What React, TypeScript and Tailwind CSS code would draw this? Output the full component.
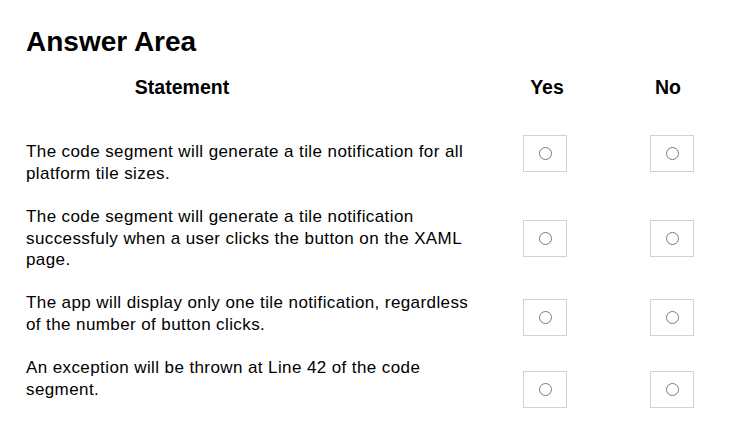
import React from "react";

const rows = [
  {
    text: "The code segment will generate a tile notification for all platform tile sizes.",
    rowMt: "mt-[42px]",
    boxMt: "-mt-[6px]",
  },
  {
    text: "The code segment will generate a tile notification successfuly when a user clicks the button on the XAML page.",
    rowMt: "mt-[22px]",
    boxMt: "mt-[14px]",
  },
  {
    text: "The app will display only one tile notification, regardless of the number of button clicks.",
    rowMt: "mt-[21.5px]",
    boxMt: "mt-[7px]",
  },
  {
    text: "An exception will be thrown at Line 42 of the code segment.",
    rowMt: "mt-[21px]",
    boxMt: "mt-[14px]",
  },
];

function Box() {
  return (
    <div className="w-[44px] h-[37px] border border-[#d2d2d2] bg-white flex items-center justify-center">
      <div className="w-[13px] h-[13px] rounded-full border border-[#7a7a7a]" />
    </div>
  );
}

export default function App() {
  return (
    <div
      className="w-[743px] h-[434px] bg-white text-black overflow-hidden"
      style={{ fontFamily: '"Liberation Sans", Arial, sans-serif' }}
    >
      <div className="pt-[26px] pl-[26px] text-[28px] leading-[32px] font-bold">Answer Area</div>
      <div className="mt-[17px] flex pl-[26px] text-[19.5px] leading-[24px] font-bold">
        <div className="w-[312px] text-center">Statement</div>
        <div className="ml-[179px] w-[60px] text-center">Yes</div>
        <div className="ml-[61px] w-[60px] text-center">No</div>
      </div>
      {rows.map((r, i) => (
        <div key={i} className={`flex items-start pl-[26px] ${r.rowMt}`}>
          <div className="w-[450px] text-[17px] leading-[21.5px] tracking-[0.4px]">{r.text}</div>
          <div className={`flex ml-[47px] gap-[83px] ${r.boxMt}`}>
            <Box />
            <Box />
          </div>
        </div>
      ))}
    </div>
  );
}
